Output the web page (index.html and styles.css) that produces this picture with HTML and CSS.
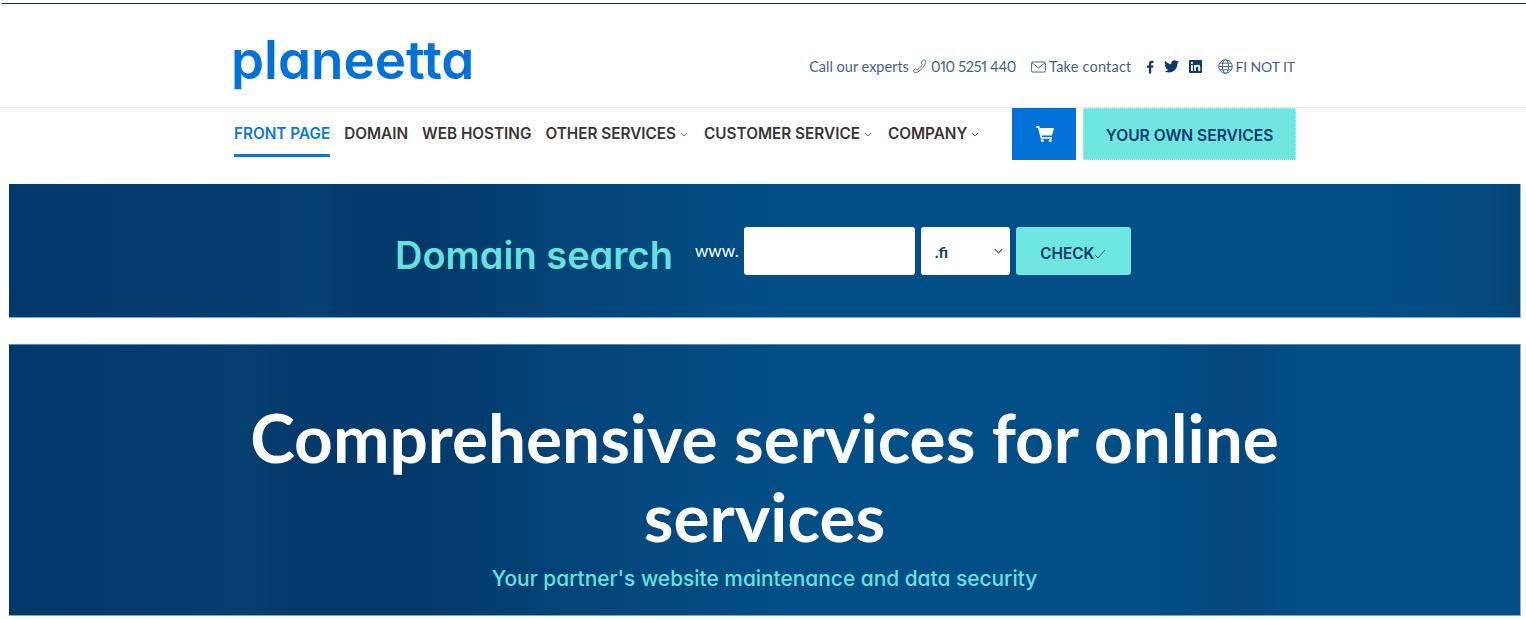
FILE: index.html
```html
<!DOCTYPE html>
<html lang="en">
<head>
<meta charset="utf-8">
<title>Planeetta</title>
<link rel="stylesheet" href="styles.css">
</head>
<body>
<div class="topline"></div>
<header class="brandbar">
  <div class="wrap brandrow">
    <a class="logo" href="#">planeetta</a>
    <div class="contacts">
      <span class="contact">Call our experts
        <svg class="ico phone" viewBox="0 0 16 16"><path d="M13.6 1.2c1.2.6 1.3 1.9.8 3.1C13 8 9.500 12.300 5.800 14c-1.400.6-3 .6-3.900-.4-.6-.7-.5-1.500.2-2 .6-.4 1.300-.8 1.900-.8.600 0 1 .7 1.500.9C7.500 10.800 10.500 7 11 5.700c-.4-.5-1.100-.8-1.100-1.400 0-.7.5-1.400 1-2 .6-.8 1.600-1.600 2.700-1.100z"/></svg>
        <span class="number">010 5251 440</span></span>
      <span class="contact mail">
        <svg class="ico envelope" viewBox="0 0 16 12"><rect x=".6" y=".6" width="14.800" height="10.800" rx="1.500"/><path d="M1 1.500l7 5.500 7-5.500"/></svg>
        Take contact</span>
      <span class="socials">
        <svg class="social fb" viewBox="0 0 10 16"><path d="M6.500 16V9h2.400l.4-2.900H6.500V4.400c0-.8.300-1.400 1.400-1.400h1.500V.4C9.100.3 8.300.2 7.300.2 5.100.2 3.600 1.500 3.600 4v2.100H1.200V9h2.400v7z"/></svg>
        <svg class="social tw" viewBox="0 0 24 20"><path d="M24 2.400c-.9.400-1.800.7-2.800.8 1-.6 1.800-1.600 2.200-2.700-1 .6-2 1-3.100 1.200C19.300.7 18 .1 16.500.1c-2.700 0-4.900 2.200-4.900 4.900 0 .4 0 .8.100 1.100C7.600 5.900 4 4 1.700.9c-.4.700-.7 1.600-.7 2.500 0 1.700.9 3.200 2.200 4.100-.8 0-1.600-.2-2.200-.6v.1c0 2.400 1.700 4.400 3.900 4.800-.7.200-1.500.2-2.200.1.600 2 2.400 3.400 4.600 3.400-1.700 1.300-3.800 2.100-6.100 2.100-.4 0-.8 0-1.200-.1 2.200 1.400 4.800 2.200 7.500 2.200 9.100 0 14-7.500 14-14v-.6c1-.7 1.800-1.600 2.500-2.500z"/></svg>
        <svg class="social li" viewBox="0 0 14 14"><path fill-rule="evenodd" d="M1 0h12a1 1 0 0 1 1 1v12a1 1 0 0 1-1 1H1a1 1 0 0 1-1-1V1a1 1 0 0 1 1-1zm1.100 5.300v6.600h2.100V5.300zm1-3.300a1.200 1.200 0 1 0 0 2.400 1.200 1.200 0 0 0 0-2.400zm2.500 3.300v6.600h2V8.600c0-.9.200-1.700 1.300-1.700s1.100 1 1.100 1.800v3.200h2.100V8.300c0-1.800-.4-3.100-2.500-3.100-1 0-1.700.5-2 1.100V5.300z"/></svg>
      </span>
      <span class="contact lang">
        <svg class="ico globe" viewBox="0 0 16 16"><circle cx="8" cy="8" r="7.200"/><ellipse cx="8" cy="8" rx="3.200" ry="7.200"/><path d="M.8 8h14.400M1.800 4.500h12.400M1.800 11.500h12.400"/></svg>
        FI NOT IT</span>
    </div>
  </div>
</header>
<nav class="navbar">
  <div class="wrap navrow">
    <ul class="menu">
      <li class="item active"><a href="#">FRONT PAGE</a></li>
      <li class="item"><a href="#">DOMAIN</a></li>
      <li class="item"><a href="#">WEB HOSTING</a></li>
      <li class="item"><a href="#">OTHER SERVICES<svg class="chev" viewBox="0 0 8 5"><path d="M1 1l3 3 3-3"/></svg></a></li>
      <li class="item"><a href="#">CUSTOMER SERVICE<svg class="chev" viewBox="0 0 8 5"><path d="M1 1l3 3 3-3"/></svg></a></li>
      <li class="item"><a href="#">COMPANY<svg class="chev" viewBox="0 0 8 5"><path d="M1 1l3 3 3-3"/></svg></a></li>
    </ul>
    <a class="cart" href="#" aria-label="Cart">
      <svg class="carticon" viewBox="0 0 18 16"><path d="M0 0h3.200l.6 2H18l-2 7.500H5.800l.4 1.500H16v1.700H4.800L2 1.700H0z"/><circle cx="6.300" cy="14.500" r="1.500"/><circle cx="14.300" cy="14.500" r="1.500"/></svg>
    </a>
    <a class="own" href="#">YOUR OWN SERVICES</a>
  </div>
</nav>
<section class="band search">
  <h2 class="search-title">Domain search</h2>
  <span class="www">www.</span>
  <input class="domain" type="text" aria-label="Domain">
  <span class="selectbox">
    <select class="tld" aria-label="Extension"><option>.fi</option></select>
    <svg class="selchev" viewBox="0 0 10 6"><path d="M1 1l4 4 4-4"/></svg>
  </span>
  <button class="check" type="button">CHECK<svg class="tick" viewBox="0 0 12 10"><path d="M1 6l3 3 7-8"/></svg></button>
</section>
<section class="band hero">
  <h1 class="hero-title">Comprehensive services for online services</h1>
  <p class="hero-sub">Your partner's website maintenance and data security</p>
</section>
</body>
</html>
```

FILE: styles.css
```css
* { box-sizing: border-box; }
html, body { margin: 0; padding: 0; background: #fff; overflow: hidden; }
body { font-family: "Lato", "Liberation Sans", sans-serif; color: #333; height: 619px; }
a { text-decoration: none; color: inherit; }

.topline { height: 1px; margin: 3px 0 0 2px; background: #1c2f50; }
.wrap { width: 1062px; margin-left: 234px; }

.brandbar { height: 104px; border-bottom: 1px solid #e8ecf1; }
.brandrow { display: flex; align-items: center; justify-content: space-between; height: 103px; }
.logo { font-family: "Inter", sans-serif; font-feature-settings: "cv11"; font-weight: 600; font-size: 53px; line-height: 60px; color: #0271d8; margin: 9px 0 0 -3px; }
.contacts { display: flex; align-items: center; font-size: 14.500px; color: #3f6583; margin: 22px 1px 0 0; }
.contact { display: inline-flex; align-items: center; gap: 3px; white-space: nowrap; }
.number { font-variant-numeric: proportional-nums; letter-spacing: -.3px; margin-left: 1px; }
.ico { fill: none; stroke: #3f6583; stroke-width: 1; flex: none; }
.phone { width: 15px; height: 15px; }
.envelope { width: 15px; height: 12px; }
.globe { width: 15px; height: 15px; }
.mail { margin-left: 15px; letter-spacing: .2px; }
.lang { font-size: 14px; letter-spacing: -.1px; gap: 2px; }
.socials { display: inline-flex; align-items: center; gap: 10px; margin: 0 16px 0 15px; }
.social { fill: #0c3a6b; display: block; }
.fb { width: 8px; height: 14px; }
.tw { width: 15px; height: 13px; }
.li { width: 13px; height: 13px; }

.navbar { height: 52px; margin-bottom: 24px; }
.navrow { display: flex; height: 52px; }
.menu { display: flex; gap: 14px; list-style: none; margin: 0; padding: 0; flex: 1; }
.item a { display: flex; align-items: center; height: 49px; font-family: "Inter", sans-serif; font-size: 15.300px; font-weight: 600; color: #3a3535; white-space: nowrap; padding-top: 4px; border-bottom: 3px solid transparent; }
.item.active a { color: #0a78d4; border-bottom-color: #0a78d4; }
.chev { width: 8px; height: 5px; margin: 2px 2px 0 4px; fill: none; stroke: #6c6c6c; stroke-width: 1; }
.cart { width: 64px; height: 52px; background: #0271d8; display: flex; align-items: center; justify-content: center; padding-left: 2px; }
.carticon { width: 18px; height: 16px; fill: #fff; }
.own { width: 213px; height: 52px; margin-left: 7px; background: #6ee7e0; border: 1px dotted #bdf3ef; color: #0d3a6b; font-family: "Inter", sans-serif; font-size: 15.600px; font-weight: 600; display: flex; align-items: center; justify-content: center; padding-top: 3px; }

.band { margin: 0 5px 0 9px; }
.search { height: 134px; display: flex; align-items: center; padding-left: 386px;
  background: linear-gradient(90deg, #03386a 0, #033c6f 200px, #044070 315px, #033a6b 345px, #033a6b 430px, #034479 560px, #024f88 800px, #024f88 1340px, #04497f 1480px, #034477 1512px);
  border-bottom: 1px solid #7fa6cb; border-right: 1px solid #93b2d1; }
.search-title { margin: 8px 0 0; font-family: "Inter", sans-serif; font-feature-settings: "cv11"; font-size: 38px; line-height: 46px; font-weight: 600; color: #66e2de; white-space: nowrap; }
.www { font-size: 17px; color: #fff; margin-left: 22px; }
.domain { width: 171px; height: 48px; margin-left: 5px; border: 0; border-radius: 3px; background: #fff; }
.selectbox { position: relative; display: block; margin-left: 6px; width: 89px; height: 48px; }
.tld { appearance: none; width: 100%; height: 100%; border: 0; border-radius: 3px; background: #fff; padding: 2px 0 0 14px; font-family: inherit; font-size: 16px; color: #0d3a6b; font-weight: 700; }
.selchev { position: absolute; right: 7px; top: 21px; width: 9px; height: 6px; fill: none; stroke: #3f6583; stroke-width: 1.300; }
.check { width: 115px; height: 48px; margin-left: 6px; border: 0; border-radius: 3px; background: #6ee7e0; color: #0d3a6b; font-family: "Inter", sans-serif; font-size: 15.300px; font-weight: 600; display: flex; align-items: center; justify-content: center; padding: 5px 0 0; }
.tick { width: 12px; height: 10px; fill: none; stroke: #3f6583; stroke-width: 1; margin-top: 1px; }

.hero { height: 272px; margin-top: 26px; text-align: center;
  background: linear-gradient(90deg, #03386a 0, #033c6f 180px, #044070 235px, #033a6b 275px, #033a6b 420px, #034479 560px, #024f88 800px, #024f88 1130px, #03477d 1230px, #024f88 1300px, #024f88 1512px);
  border-top: 1px solid #5c88b2; border-bottom: 1px solid #7fa6cb; border-right: 1px solid #93b2d1; padding-top: 52px; }
.hero-title { margin: 0 auto; width: 1100px; font-size: 67.500px; line-height: 79px; font-weight: 700; color: #fff; }
.hero-sub { margin: 9px 0 0; font-family: "Inter", sans-serif; font-feature-settings: "cv11"; font-size: 20.900px; line-height: 30px; color: #66e2de; font-weight: 500; }
```
